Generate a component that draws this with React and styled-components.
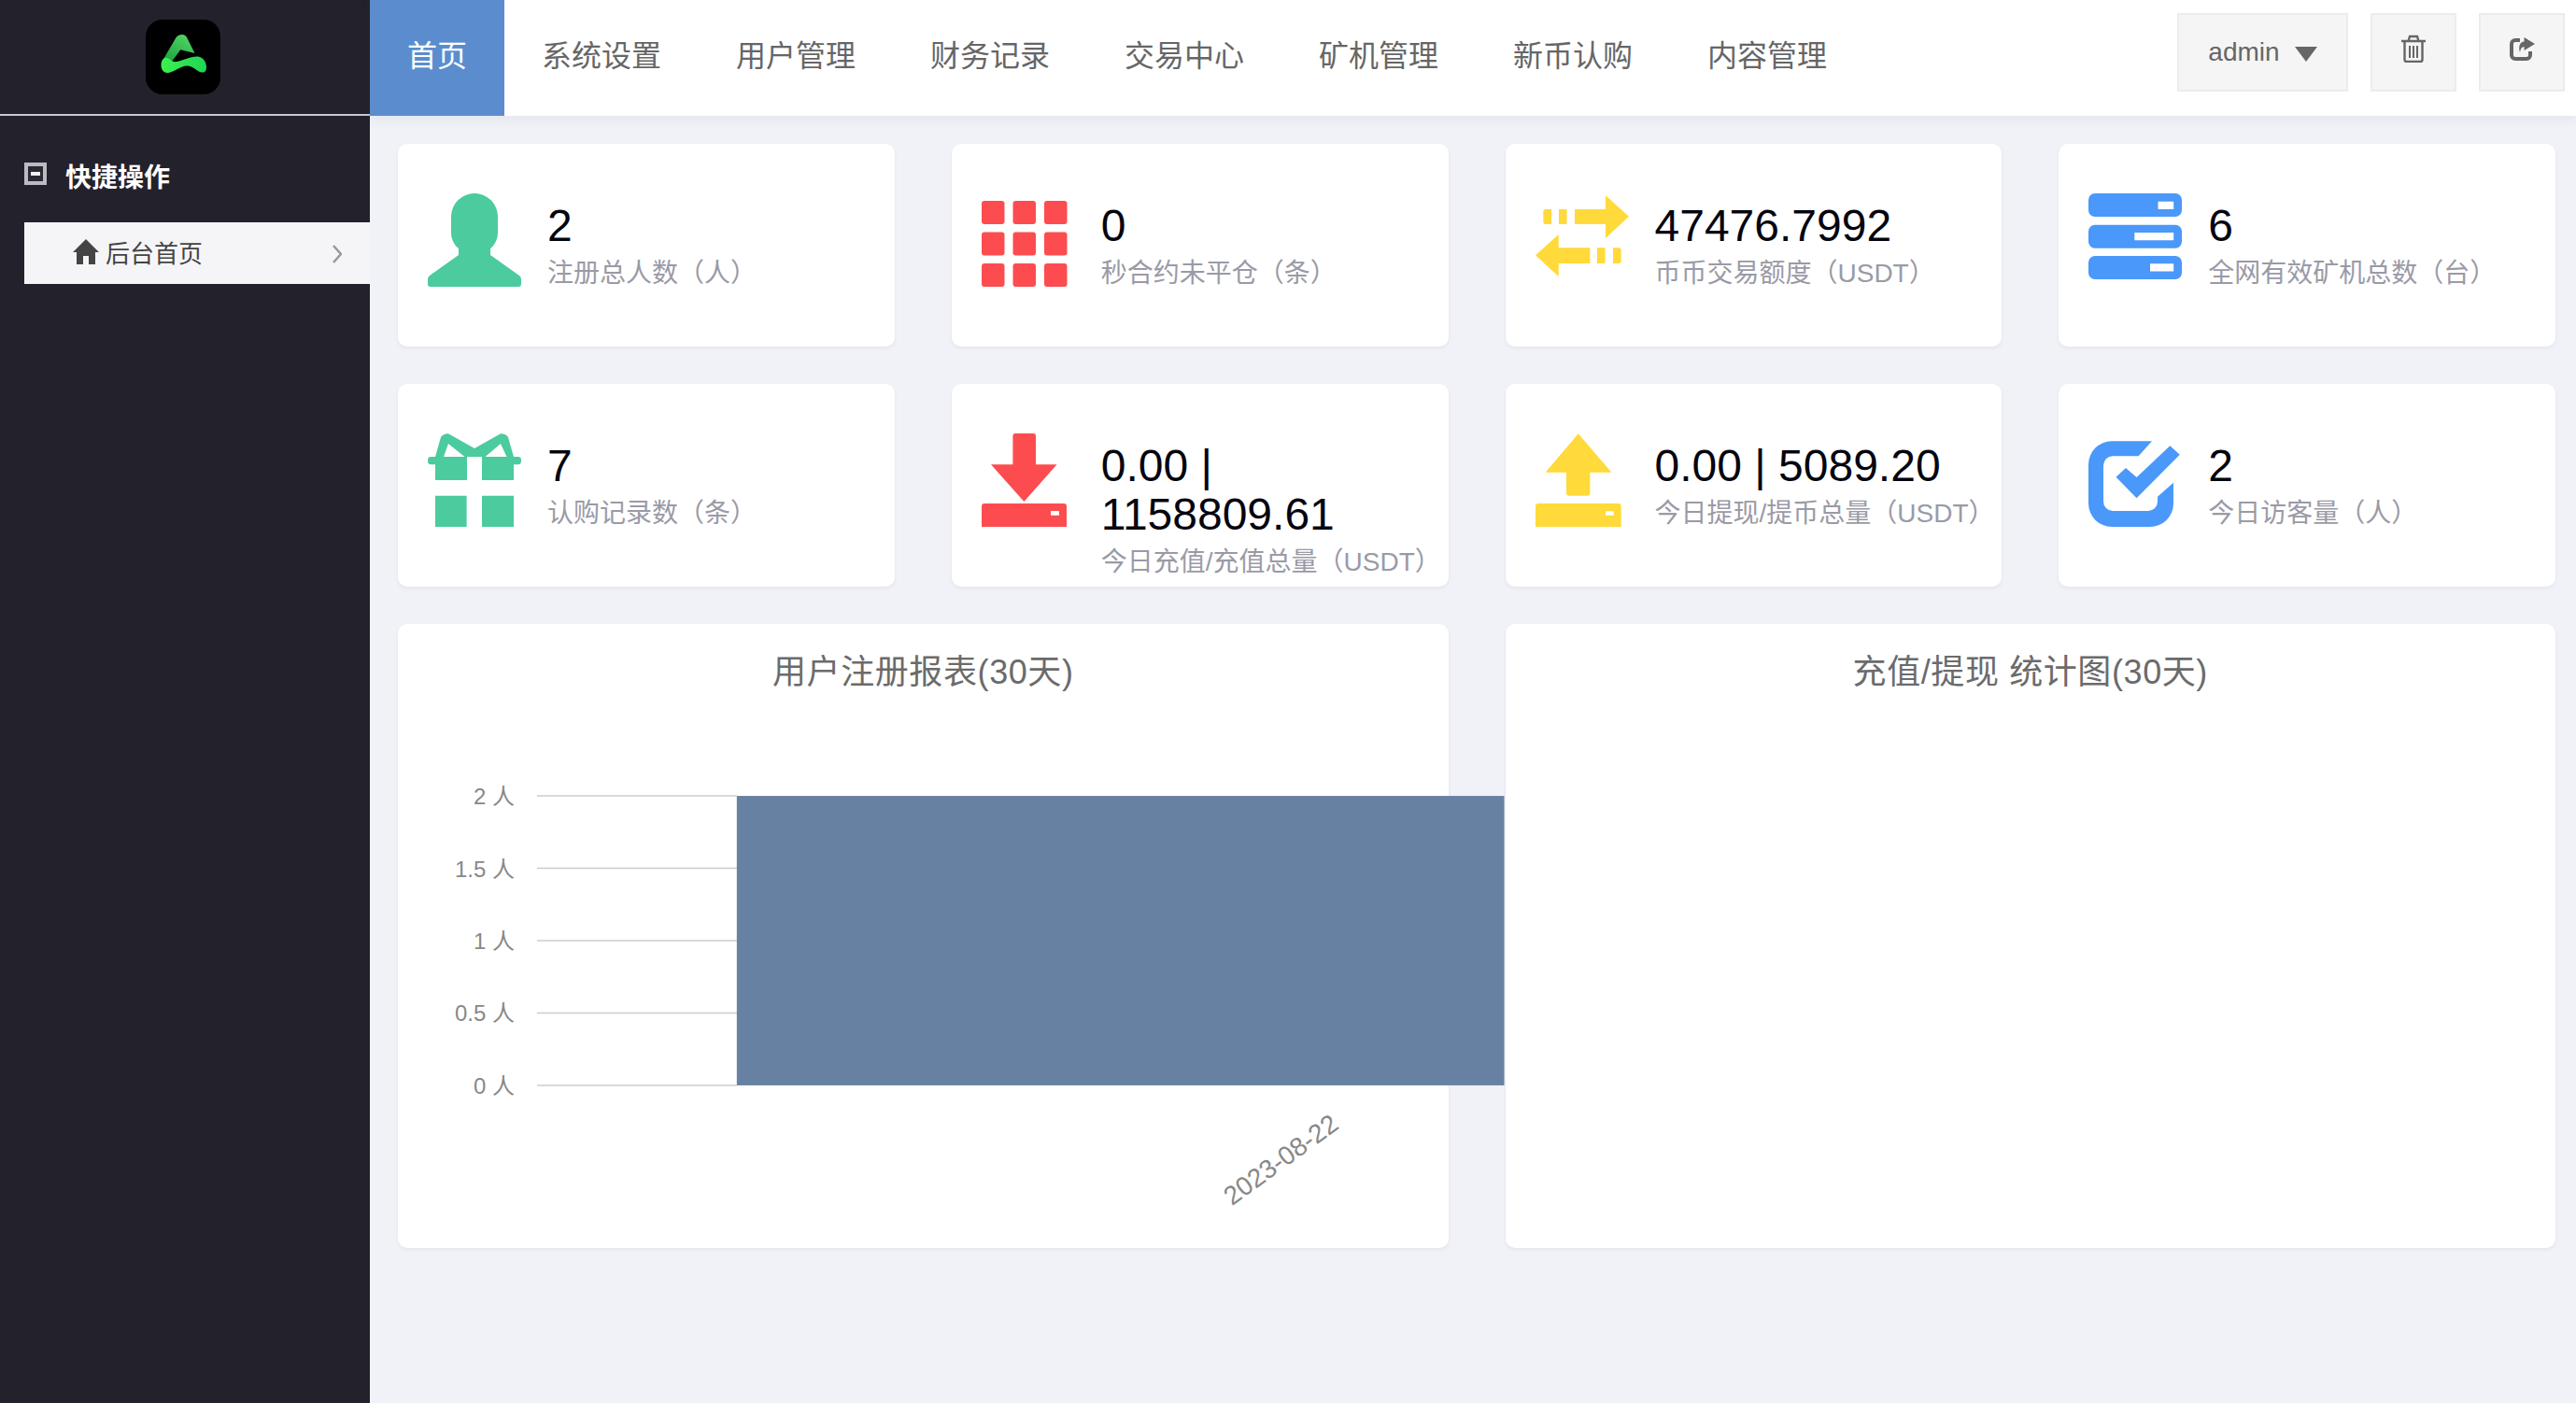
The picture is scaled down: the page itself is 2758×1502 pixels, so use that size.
import styled, { createGlobalStyle } from "styled-components";

const FONT = `"Liberation Sans", "Noto Sans CJK SC", sans-serif`;

const GlobalStyle = createGlobalStyle`
  * { box-sizing: border-box; }
  html, body { margin: 0; padding: 0; }
  body { font-family: ${FONT}; background: #f0f2f7; }
`;

const Page = styled.div`
  display: flex;
  height: 100vh;
  overflow: hidden;
`;

const Sidebar = styled.aside`
  width: 396px;
  flex: none;
  background: #23222c;
`;

const LogoBar = styled.div`
  height: 124px;
  padding: 21px 4px 0 0;
  display: flex;
  justify-content: center;
  border-bottom: 2px solid #c9c9cf;
`;

const GroupTitle = styled.div`
  margin-top: 50px;
  padding-left: 26px;
  height: 28px;
  display: flex;
  align-items: center;
  gap: 20px;
  color: #fff;
  font-size: 28px;
  font-weight: 700;
`;

const MinusBox = styled.span`
  width: 24px;
  height: 24px;
  margin-top: -4px;
  border: 4px solid #bcbbc2;
  background: #2b2a34;
  display: flex;
  align-items: center;
  justify-content: center;
  &::after {
    content: "";
    width: 10px;
    height: 4px;
    background: #f2f2f2;
  }
`;

const MenuItem = styled.div`
  margin: 36px 0 0 26px;
  height: 66px;
  padding: 0 30px 4px 52px;
  display: flex;
  align-items: center;
  gap: 7px;
  background: #f5f5f7;
  color: #444;
  font-size: 26px;
  svg:last-child {
    margin: 6px 0 0 auto;
  }
`;

const Main = styled.div`
  flex: 1;
  min-width: 0;
  display: flex;
  flex-direction: column;
`;

const Header = styled.header`
  height: 124px;
  flex: none;
  display: flex;
  background: #fff;
  box-shadow: 0 3px 12px rgba(40, 50, 80, 0.07);
`;

const NavItem = styled.a`
  padding: 0 40px 10px;
  display: flex;
  align-items: center;
  font-size: 32px;
  color: ${(p) => (p.$active ? "#fff" : "#666")};
  background: ${(p) => (p.$active ? "#5b8dce" : "transparent")};
`;

const Actions = styled.div`
  margin-left: auto;
  padding: 14px 12px 0 0;
  display: flex;
  gap: 24px;
`;

const ActionButton = styled.button`
  width: ${(p) => p.$width || 92}px;
  height: 84px;
  padding: 0 0 ${(p) => (p.$width ? 0 : 8)}px;
  border: 2px solid #ececec;
  background: #f5f5f5;
  color: #666;
  font-family: ${FONT};
  font-size: 28px;
  display: flex;
  align-items: center;
  justify-content: center;
  gap: 16px;
`;

const Caret = styled.span`
  width: 0;
  height: 0;
  margin-top: 4px;
  border-left: 12px solid transparent;
  border-right: 12px solid transparent;
  border-top: 16px solid #666;
`;

const Content = styled.main`
  flex: 1;
  padding: 30px 22px 0 30px;
`;

const Grid = styled.div`
  display: grid;
  grid-template-columns: repeat(4, 1fr);
  gap: 40px 61px;
`;

const StatCard = styled.article`
  height: 217px;
  padding: 53px 4px 0 32px;
  display: flex;
  gap: 28px;
  background: #fff;
  border-radius: 10px;
  box-shadow: 0 2px 4px rgba(30, 40, 70, 0.06);
`;

const StatIcon = styled.svg`
  width: 100px;
  height: 100px;
  flex: none;
  fill: ${(p) => p.$color};
`;

const StatBody = styled.div`
  flex: 1;
  min-width: 0;
  padding-top: 9px;
`;

const StatValue = styled.div`
  font-size: 48px;
  line-height: 52px;
  color: #05050f;
`;

const StatLabel = styled.div`
  font-size: 28px;
  line-height: 50px;
  color: #9a9aa6;
  white-space: nowrap;
`;

const ChartCard = styled.section`
  grid-column: span 2;
  height: 668px;
  padding-top: 28px;
  background: #fff;
  border-radius: 10px;
  box-shadow: 0 2px 4px rgba(30, 40, 70, 0.06);
`;

const ChartTitle = styled.h2`
  margin: 0;
  font-size: 36px;
  font-weight: 400;
  line-height: 48px;
  letter-spacing: 0.6px;
  text-align: center;
  color: #6b6b6b;
`;

const ChartSvg = styled.svg`
  display: block;
  width: 100%;
  height: 592px;
  overflow: visible;
`;

const AxisText = styled.text`
  font-family: ${FONT};
  font-size: 24px;
  fill: #888;
`;

const DateText = styled(AxisText)`
  font-size: 28px;
`;

const Logo = () => (
  <svg width="80" height="80" viewBox="0 0 80 80">
    <defs>
      <linearGradient id="logoTop" x1="0.7" y1="0" x2="0.1" y2="1">
        <stop offset="0" stopColor="#4fd465" />
        <stop offset="1" stopColor="#159a3a" />
      </linearGradient>
      <linearGradient id="logoBand" x1="0" y1="0" x2="1" y2="0">
        <stop offset="0" stopColor="#3df04f" />
        <stop offset="1" stopColor="#1ed653" />
      </linearGradient>
    </defs>
    <rect width="80" height="80" rx="18" fill="#000" />
    <path
      d="M39 16C36 16 34 17 32 20L18 44L24 50L30 42L37.3 32.3L52.5 36L44 19C43 17 41 16 39 16Z"
      fill="url(#logoTop)"
    />
    <path
      d="M16.5 49C16.5 44 19 40 23 41C27 42 28 46 33 45C40 44 48 39 56 39.5C61 40 65 45 65 51C65 55 63 57 60 56.5C54 55.5 52 50 45 49.5C37 49 30 57 23 57C19 57 16.5 53 16.5 49Z"
      fill="url(#logoBand)"
    />
  </svg>
);

const TrashIcon = () => (
  <svg width="26" height="30" viewBox="0 0 26 30" fill="none" stroke="#666" strokeWidth="2.4">
    <path d="M0 7H26M7.5 7L9 2H17L18.5 7" />
    <path d="M3.5 7V27a2 2 0 0 0 2 2H20.500a2 2 0 0 0 2-2V7" />
    <path d="M9 12V25M13 12V25M17 12V25" strokeWidth="2" />
  </svg>
);

const ShareIcon = () => (
  <svg width="27" height="25" viewBox="0 0 27 25">
    <path
      d="M11 3H6a4 4 0 0 0-4 4V19a4 4 0 0 0 4 4H18a4 4 0 0 0 4-4V15"
      fill="none"
      stroke="#666"
      strokeWidth="4"
    />
    <path d="M15.500 0L27 7L15.500 14V10C13 10 11.500 12 11 16C9 10 11 4.500 15.500 4.500Z" fill="#666" />
  </svg>
);

const HomeIcon = () => (
  <svg width="28" height="27" viewBox="0 0 28 27" fill="#444">
    <path d="M14 0L28 14H24V27H17V18H11V27H4V14H0Z" />
  </svg>
);

const ChevronIcon = () => (
  <svg width="10" height="20" viewBox="0 0 10 20" fill="none" stroke="#999" strokeWidth="2.500">
    <path d="M1 1L9 10L1 19" />
  </svg>
);

const PersonShape = () => (
  <path d="M25 25a25 25 0 0 1 50 0V42c0 8-4 14-8 17V66L98 88q2 1.500 2 4V97q0 3-3 3H3q-3 0-3-3V92q0-2.500 2-4L33 66V59C29 56 25 50 25 42Z" />
);

const GridShape = () => (
  <>
    {[8, 41.5, 75].map((y) =>
      [0, 33.5, 67].map((x) => (
        <rect key={`${x}-${y}`} x={x} y={y} width="24.500" height="25" rx="3" />
      ))
    )}
  </>
);

const SwapShape = () => (
  <path d="M75 2.300L100 24.700L75 48V33H42V17H75ZM25 17H33.500V33H25ZM11 17H17V33H11Q8.300 33 8.300 30V20Q8.300 17 11 17ZM24.700 44V58.300H58.400V75H24.700V89L0 66.300ZM66 58.300H74.500V75H66ZM83 58.300H89Q91.700 58.300 91.700 61V72Q91.700 75 89 75H83Z" />
);

const ServerShape = () => (
  <path
    fillRule="evenodd"
    d="M7 0H93a7 7 0 0 1 7 7V18a7 7 0 0 1-7 7H7a7 7 0 0 1-7-7V7a7 7 0 0 1 7-7ZM74.500 8.700V17H91.200V8.700ZM7 33.700H93a7 7 0 0 1 7 7V51.700a7 7 0 0 1-7 7H7a7 7 0 0 1-7-7V40.700a7 7 0 0 1 7-7ZM49.300 42V50.300H91.200V42ZM7 67H93a7 7 0 0 1 7 7V85a7 7 0 0 1-7 7H7a7 7 0 0 1-7-7V74a7 7 0 0 1 7-7ZM66 75.300V83.600H91.200V75.300Z"
  />
);

const GiftShape = () => (
  <path
    fillRule="evenodd"
    d="M8 25L14 4Q17 0 22 0.300L50 16L78 0.300Q83 0 86 4L92 25H97Q100 25 100 29Q100 33.300 97 33.300H92V50H58V25H42V50H8V33.300H3Q0 33.300 0 29Q0 25 3 25ZM17 25H39.500L22 11ZM61.500 25H84.500L78 11ZM8 66.700H41.600V100H8ZM58 66.700H92V100H58Z"
  />
);

const DownloadShape = () => (
  <path
    fillRule="evenodd"
    d="M36 0H55.500Q58 0 58 3V33.300H80.500L45.400 73L10 33.300H33.400V3Q33.400 0 36 0ZM3 75H88Q91 75 91 78V100H0V78Q0 75 3 75ZM74 83V87.700H83V83Z"
  />
);

const UploadShape = () => (
  <path
    fillRule="evenodd"
    d="M45.800 0.300L81.400 41.700H58.400V63.700Q58.400 66.700 55.400 66.700H36Q33 66.700 33 63.700V41.700H10.600ZM3 75H89Q91.700 75 91.700 78V100H0V78Q0 75 3 75ZM75 83.300V87.700H83.700V83.300Z"
  />
);

const CheckShape = () => (
  <path
    fillRule="evenodd"
    d="M25 8.300H68L53.600 24.300H26a10 10 0 0 0-10 10V73a10 10 0 0 0 10 10H64a10 10 0 0 0 10-10V67.700L91 52.700V75a25 25 0 0 1-25 25H25a25 25 0 0 1-25-25V33.300a25 25 0 0 1 25-25ZM87.300 13.300L97.800 22.700L51.600 69.300L29.500 46.700L40 37L51.600 47Z"
  />
);

const navItems = ["首页", "系统设置", "用户管理", "财务记录", "交易中心", "矿机管理", "新币认购", "内容管理"];

const GREEN = "#4bcb9e";
const RED = "#fd4c4f";
const YELLOW = "#ffda3a";
const BLUE = "#4a98fa";

const stats = [
  { value: "2", label: "注册总人数（人）", color: GREEN, Shape: PersonShape },
  { value: "0", label: "秒合约未平仓（条）", color: RED, Shape: GridShape },
  { value: "47476.7992", label: "币币交易额度（USDT）", color: YELLOW, Shape: SwapShape },
  { value: "6", label: "全网有效矿机总数（台）", color: BLUE, Shape: ServerShape },
  { value: "7", label: "认购记录数（条）", color: GREEN, Shape: GiftShape },
  { value: "0.00 | 1158809.61", label: "今日充值/充值总量（USDT）", color: RED, Shape: DownloadShape },
  { value: "0.00 | 5089.20", label: "今日提现/提币总量（USDT）", color: YELLOW, Shape: UploadShape },
  { value: "2", label: "今日访客量（人）", color: BLUE, Shape: CheckShape },
];

const ticks = [
  { label: "2 人", y: 108 },
  { label: "1.5 人", y: 185.5 },
  { label: "1 人", y: 263 },
  { label: "0.5 人", y: 340.5 },
  { label: "0 人", y: 418 },
];

function RegisterChart() {
  return (
    <ChartSvg viewBox="0 0 1125 592">
      {ticks.map((t) => (
        <g key={t.label}>
          <line x1="149" x2="363" y1={t.y} y2={t.y} stroke="#ccc" strokeWidth="1.500" />
          <AxisText x="125" y={t.y + 9} textAnchor="end">
            {t.label}
          </AxisText>
        </g>
      ))}
      <rect x="363" y="108" width="822" height="310" fill="#6781a3" />
      <DateText x="946" y="507" textAnchor="middle" transform="rotate(-36 946 498)">
        2023-08-22
      </DateText>
    </ChartSvg>
  );
}

export default function App() {
  return (
    <Page>
      <GlobalStyle />
      <Sidebar>
        <LogoBar>
          <Logo />
        </LogoBar>
        <GroupTitle>
          <MinusBox />
          快捷操作
        </GroupTitle>
        <MenuItem>
          <HomeIcon />
          后台首页
          <ChevronIcon />
        </MenuItem>
      </Sidebar>
      <Main>
        <Header>
          {navItems.map((item, i) => (
            <NavItem key={item} $active={i === 0}>
              {item}
            </NavItem>
          ))}
          <Actions>
            <ActionButton $width={183}>
              admin
              <Caret />
            </ActionButton>
            <ActionButton>
              <TrashIcon />
            </ActionButton>
            <ActionButton>
              <ShareIcon />
            </ActionButton>
          </Actions>
        </Header>
        <Content>
          <Grid>
            {stats.map(({ value, label, color, Shape }) => (
              <StatCard key={label}>
                <StatIcon viewBox="0 0 100 100" $color={color}>
                  <Shape />
                </StatIcon>
                <StatBody>
                  <StatValue>{value}</StatValue>
                  <StatLabel>{label}</StatLabel>
                </StatBody>
              </StatCard>
            ))}
            <ChartCard>
              <ChartTitle>用户注册报表(30天)</ChartTitle>
              <RegisterChart />
            </ChartCard>
            <ChartCard>
              <ChartTitle>充值/提现 统计图(30天)</ChartTitle>
            </ChartCard>
          </Grid>
        </Content>
      </Main>
    </Page>
  );
}
